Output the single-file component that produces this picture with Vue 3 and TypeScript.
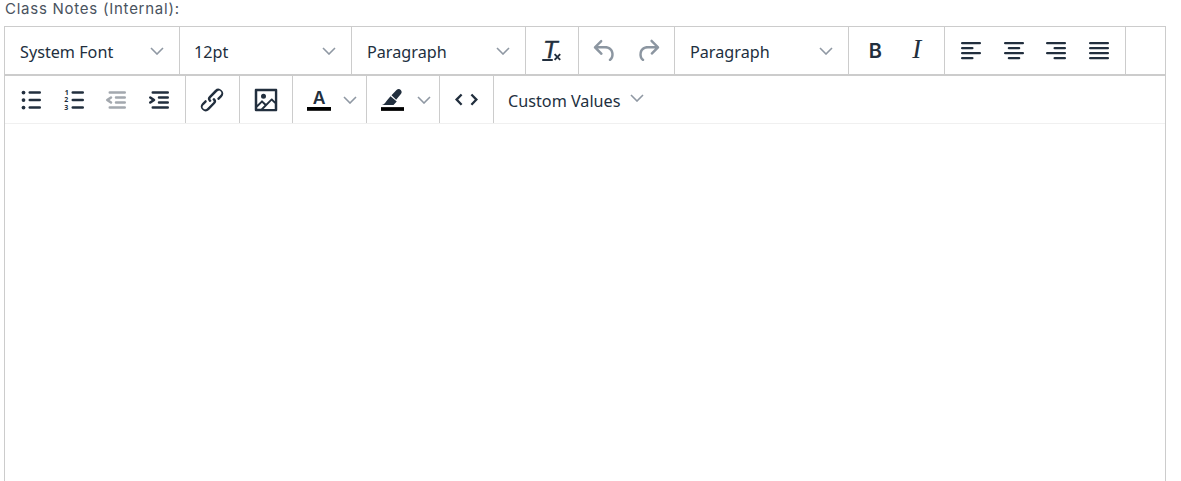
<script setup lang="ts">
const fontSizes = { family: 'System Font', size: '12pt', block: 'Paragraph', format: 'Paragraph' }
const indentBars = 'M7 5h12a1 1 0 0 1 0 2H7a1 1 0 1 1 0-2zm5 4h7a1 1 0 0 1 0 2h-7a1 1 0 0 1 0-2zm0 4h7a1 1 0 0 1 0 2h-7a1 1 0 0 1 0-2zm-5 4h12a1 1 0 0 1 0 2H7a1 1 0 0 1 0-2z'
const paths = {
  outdent: indentBars + 'm1.6-3.8a1 1 0 0 1-1.2 1.6l-3-2a1 1 0 0 1 0-1.6l3-2a1 1 0 0 1 1.2 1.6L6.8 12l1.8 1.2z',
  indent: indentBars + 'm-2.6-3.8L6.2 12l-1.8-1.2a1 1 0 0 1 1.2-1.6l3 2a1 1 0 0 1 0 1.6l-3 2a1 1 0 1 1-1.2-1.6z',
  link: 'M6.2 12.3a1 1 0 0 1 1.4 1.4l-2 2a2 2 0 1 0 2.6 2.8l4.8-4.8a1 1 0 0 0 0-1.4 1 1 0 1 1 1.4-1.3 2.9 2.9 0 0 1 0 4L9.6 20a3.9 3.9 0 0 1-5.5-5.5l2-2zm11.6-.6a1 1 0 0 1-1.4-1.4l2-2a2 2 0 1 0-2.6-2.8L11 10.3a1 1 0 0 0 0 1.4A1 1 0 1 1 9.6 13a2.9 2.9 0 0 1 0-4L14.4 4a3.9 3.9 0 0 1 5.5 5.5l-2 2z',
  image: 'M5 15.7l3.3-3.2c.3-.3.7-.3 1 0L12 15l4.1-4c.3-.4.8-.4 1 0l2 1.9V5H5v10.7zM5 18v1h3l2.8-2.9-2-2L5 17.9zm14-3l-2.5-2.4-6.4 6.5H19v-4zM4 3h16c.6 0 1 .4 1 1v16c0 .6-.4 1-1 1H4a1 1 0 0 1-1-1V4c0-.6.4-1 1-1zm6 8a2 2 0 1 0 0-4 2 2 0 0 0 0 4z',
  undo: 'M6.4 8H12c3.7 0 6.2 2 6.8 5.1.6 2.7-.4 5.6-2.3 6.8a1 1 0 0 1-1-1.8c1.1-.6 1.8-2.7 1.4-4.6-.5-2.1-2.1-3.5-4.9-3.5H6.4l3.3 3.3a1 1 0 1 1-1.4 1.4l-5-5a1 1 0 0 1 0-1.4l5-5a1 1 0 0 1 1.4 1.4L6.4 8z',
  redo: 'M17.6 10H12c-2.8 0-4.4 1.4-4.9 3.5-.4 2 .3 4 1.4 4.6a1 1 0 1 1-1 1.8c-2-1.2-2.9-4.1-2.3-6.8.6-3 3-5.1 6.8-5.1h5.6l-3.3-3.3a1 1 0 1 1 1.4-1.4l5 5a1 1 0 0 1 0 1.4l-5 5a1 1 0 0 1-1.4-1.4l3.3-3.3z',
  pen: 'M3 16c1.8-.6 3-2 3.8-3.3L10 9l5 4.2-2.6 2.8H3zM10.8 8.2l4-4.2c1-1 2.5-1 3.4-.1.9.9 1 2.3.1 3.3l-3.8 4.5z'
}
const aligns = [
  [[4, 16], [4, 10], [4, 16], [4, 10]],
  [[4, 16], [7, 10], [4, 16], [7, 10]],
  [[4, 16], [10, 10], [4, 16], [10, 10]],
  [[4, 16], [4, 16], [4, 16], [4, 16]]
]
</script>

<template>
  <main class="page">
    <div class="label">Class Notes (Internal):</div>
    <section class="editor">
      <div class="row row-top">
        <div class="select w175"><span>{{ fontSizes.family }}</span><svg class="chev" viewBox="0 0 14 8"><path d="M1 1l6 6 6-6" /></svg></div>
        <div class="select w172"><span>{{ fontSizes.size }}</span><svg class="chev" viewBox="0 0 14 8"><path d="M1 1l6 6 6-6" /></svg></div>
        <div class="select w174"><span>{{ fontSizes.block }}</span><svg class="chev" viewBox="0 0 14 8"><path d="M1 1l6 6 6-6" /></svg></div>
        <div class="group w53">
          <button class="btn">
            <svg class="icon" viewBox="0 0 30 30">
              <text class="glyph-t" x="6" y="22">T</text>
              <rect x="5" y="23" width="11" height="1.9" rx=".9" />
              <path class="x-mark" d="M17.6 18.2l5.6 5.6m0-5.6l-5.6 5.6" />
            </svg>
          </button>
        </div>
        <div class="group w96">
          <button class="btn"><svg class="icon muted" viewBox="0 0 24 24"><path :d="paths.undo" /></svg></button>
          <button class="btn"><svg class="icon muted" viewBox="0 0 24 24"><path :d="paths.redo" /></svg></button>
        </div>
        <div class="select w174"><span>{{ fontSizes.format }}</span><svg class="chev" viewBox="0 0 14 8"><path d="M1 1l6 6 6-6" /></svg></div>
        <div class="group w96">
          <button class="btn"><span class="bold-b">B</span></button>
          <button class="btn"><span class="italic-i">I</span></button>
        </div>
        <div class="group w181">
          <button v-for="(bars, i) in aligns" :key="i" class="btn">
            <svg class="icon" viewBox="0 0 24 24">
              <rect v-for="(b, j) in bars" :key="j" :x="b[0]" :y="4.7 + j * 4" :width="b[1]" height="1.9" rx=".9" />
            </svg>
          </button>
        </div>
      </div>
      <div class="row row-bottom">
        <div class="group w181">
          <button class="btn">
            <svg class="icon" viewBox="0 0 24 24">
              <circle cx="6" cy="6" r="1.5" /><circle cx="6" cy="12" r="1.5" /><circle cx="6" cy="18" r="1.5" />
              <rect x="10" y="5" width="10" height="2" rx="1" /><rect x="10" y="11" width="10" height="2" rx="1" /><rect x="10" y="17" width="10" height="2" rx="1" />
            </svg>
          </button>
          <button class="btn">
            <svg class="icon" viewBox="0 0 24 24">
              <text class="nums" x="4.6" y="7.8">1</text><text class="nums" x="4.2" y="13.8">2</text><text class="nums" x="4.2" y="19.8">3</text>
              <rect x="10" y="5" width="10" height="2" rx="1" /><rect x="10" y="11" width="10" height="2" rx="1" /><rect x="10" y="17" width="10" height="2" rx="1" />
            </svg>
          </button>
          <button class="btn"><svg class="icon faded" viewBox="0 0 24 24"><path :d="paths.outdent" /></svg></button>
          <button class="btn"><svg class="icon" viewBox="0 0 24 24"><path :d="paths.indent" /></svg></button>
        </div>
        <div class="group w54">
          <button class="btn"><svg class="icon nudge" viewBox="0 0 24 24"><path :d="paths.link" /></svg></button>
        </div>
        <div class="group w53">
          <button class="btn"><svg class="icon" viewBox="0 0 24 24"><path fill-rule="nonzero" :d="paths.image" /></svg></button>
        </div>
        <div class="group w74">
          <button class="btn split">
            <svg class="icon" viewBox="0 0 30 30">
              <text class="glyph-a" x="15" y="19.4">A</text>
              <rect class="ink" x="3" y="22" width="24" height="3.8" />
            </svg>
            <svg class="chev small" viewBox="0 0 14 8"><path d="M1 1l6 6 6-6" /></svg>
          </button>
        </div>
        <div class="group w73">
          <button class="btn split">
            <svg class="icon" viewBox="0 0 24 24">
              <path :d="paths.pen" />
              <rect class="ink" x="2.4" y="17.7" width="18.4" height="3" />
            </svg>
            <svg class="chev small" viewBox="0 0 14 8"><path d="M1 1l6 6 6-6" /></svg>
          </button>
        </div>
        <div class="group w54">
          <button class="btn">
            <svg class="icon" viewBox="0 0 30 30"><path class="code-mark" d="M9.6 9.5L4.6 14.6l5 5.1M19.4 9.5l5 5.1-5 5.1" /></svg>
          </button>
        </div>
        <div class="custom"><span>Custom Values</span><svg class="chev raised" viewBox="0 0 14 8"><path d="M1 1l6 6 6-6" /></svg></div>
      </div>
      <div class="content"></div>
    </section>
  </main>
</template>

<style scoped>
.page {
  width: 1181px;
  height: 481px;
  overflow: hidden;
  background: #fff;
  padding-left: 4px;
  box-sizing: border-box;
}
.label {
  height: 26px;
  padding-left: 1px;
  padding-top: 1px;
  box-sizing: border-box;
  font: 15px/16px Inter, "Open Sans", sans-serif;
  letter-spacing: 0.75px;
  color: #4a535e;
}
.editor {
  width: 1162px;
  height: 520px;
  box-sizing: border-box;
  border: 1px solid #ccc;
  border-bottom: 0;
  font-family: "Noto Sans", "Open Sans", sans-serif;
  color: #222f3e;
}
.row {
  display: flex;
  align-items: stretch;
  box-sizing: border-box;
}
.row-top {
  height: 49px;
  border-bottom: 2px solid #ccc;
}
.row-bottom {
  height: 48px;
  border-bottom: 1px solid #f0f0f0;
}
.select {
  display: flex;
  align-items: center;
  justify-content: space-between;
  box-sizing: border-box;
  padding: 0 15px;
  border-right: 1px solid #ccc;
  font-size: 16.2px;
}
.select span {
  padding-top: 2px;
}
.select.w172 {
  padding-left: 14px;
}
.group {
  display: flex;
  align-items: center;
  box-sizing: border-box;
  padding: 0 5px;
  border-right: 1px solid #ccc;
}
.w175 { width: 175px; }
.w172 { width: 172px; }
.w174 { width: 174px; }
.w53 { width: 53px; }
.w54 { width: 54px; }
.w96 { width: 96px; }
.w181 { width: 181px; }
.w74 { width: 74px; }
.w73 { width: 73px; }
.btn {
  flex: 1 1 0;
  min-width: 0;
  height: 40px;
  display: flex;
  align-items: center;
  justify-content: center;
  padding: 0;
  border: 0;
  background: none;
  color: inherit;
}
.split {
  justify-content: flex-start;
  padding-left: 6px;
  gap: 7px;
}
.icon {
  width: 30px;
  height: 30px;
  flex: none;
  fill: #222f3e;
}
.nudge { margin-right: 2px; }
.muted { fill: #8c96a1; }
.faded { fill: #a3a8ae; }
.ink { fill: #000; }
.chev {
  width: 14px;
  height: 8px;
  flex: none;
  fill: none;
  stroke: #8f98a3;
  stroke-width: 1.6;
}
.small { margin-left: 2px; }
.raised { margin-bottom: 3px; }
.x-mark {
  fill: none;
  stroke: #222f3e;
  stroke-width: 1.9;
}
.code-mark {
  fill: none;
  stroke: #222f3e;
  stroke-width: 2.3;
}
.glyph-t {
  font: italic 400 24px "Liberation Sans", sans-serif;
  stroke: #222f3e;
  stroke-width: 0.4;
}
.glyph-a {
  font: 600 17.5px Inter, sans-serif;
  text-anchor: middle;
}
.nums {
  font: 700 5.6px "Noto Sans", sans-serif;
}
.bold-b {
  font: 600 20px/1 Inter, sans-serif;
}
.italic-i {
  font: italic 400 27px/1 "Liberation Serif", serif;
  margin-bottom: 2px;
  margin-right: 2px;
}
.custom {
  display: flex;
  align-items: center;
  gap: 9px;
  padding-left: 14px;
  font-size: 16.2px;
}
.custom span {
  padding-top: 2px;
}
.content {
  background: #fff;
}
</style>

<style>
html, body { overflow: hidden; }
</style>
